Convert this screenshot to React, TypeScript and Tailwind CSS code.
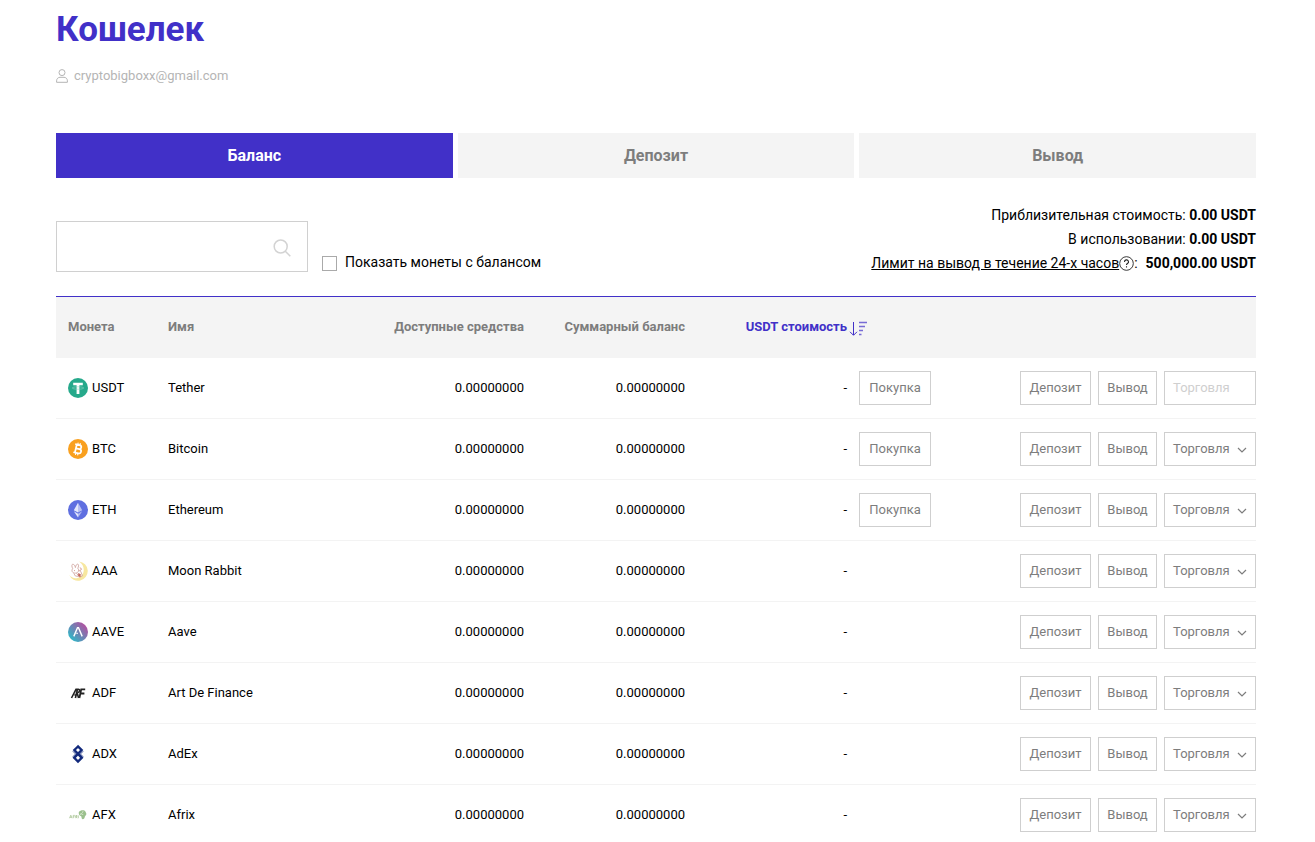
import type { ReactNode } from 'react'
import { useState } from 'react'

type Coin = {
  code: string
  name: string
  icon: ReactNode
  buy?: boolean
  tradeDisabled?: boolean
}

const coins: Coin[] = [
  {
    code: 'USDT',
    name: 'Tether',
    buy: true,
    tradeDisabled: true,
    icon: (
      <>
        <circle cx="10" cy="10" r="10" fill="#26a98b" />
        <path d="M5.200 4.800h9.600v2.400h-3.400V16H8.600V7.200H5.200z" fill="#fff" />
        <ellipse cx="10" cy="10" rx="5.800" ry="1.200" fill="none" stroke="#8ed3c3" strokeWidth="0.600" />
      </>
    ),
  },
  {
    code: 'BTC',
    name: 'Bitcoin',
    buy: true,
    icon: (
      <>
        <circle cx="10" cy="10" r="10" fill="#f9a01f" />
        <g transform="rotate(13 10 10)" fill="none" stroke="#fff">
          <path d="M7.800 5.600v8.800M6.200 5.800h4.600a2 2 0 0 1 0 4H8M6.200 14.200h5.200a2.200 2.200 0 0 0 0-4.400H8" strokeWidth="1.700" />
          <path d="M8.800 3.800v2M11 3.800v2M8.800 14.200v2M11 14.200v2" strokeWidth="1.100" />
        </g>
      </>
    ),
  },
  {
    code: 'ETH',
    name: 'Ethereum',
    buy: true,
    icon: (
      <>
        <circle cx="10" cy="10" r="10" fill="#5f6fe0" />
        <path d="M10 2.800 5.800 10.200 10 12.600z" fill="#e4e7fb" />
        <path d="M10 2.800l4.200 7.400-4.200 2.400z" fill="#b9c0f3" />
        <path d="M5.800 11.300 10 13.800v3.600z" fill="#e4e7fb" />
        <path d="M14.200 11.300 10 13.800v3.600z" fill="#b3bbf2" />
      </>
    ),
  },
  {
    code: 'AAA',
    name: 'Moon Rabbit',
    icon: (
      <>
        <path d="M11 .4a9.700 9.700 0 1 1-9.900 13.400c2 2.700 5.300 3.900 8.300 3.200 7.600-1.900 8.700-12 1.600-16.600z" fill="#f7e7a0" />
        <g fill="none" stroke="#d3a9a4" strokeWidth="0.900">
          <path d="M4.800 7.800C3.500 5.500 3.600 3.300 4.800 3.200s2.200 1.600 2.600 3.400C7.600 4.300 9 2.700 10 3.200s.6 2.600-.3 4.200" />
          <path d="M4.600 7.800c-1.600 2.400.2 4.600 2.900 4.300s4.200-2.500 2.400-4.800" />
          <path d="M8.500 12.200l3 4 3-1.400-1.800-4.400-2.600-1.400M5.800 12.400l1.600 2.600 3 .4" />
        </g>
        <path d="M10.200 12l2.600 1.200-.4 3-2.200-1.200z" fill="#c4685c" />
        <path d="M12.200 6.500l1.200 1.600-1.200 1.600M6.200 9.600h.8" stroke="#c98577" strokeWidth="0.900" fill="none" />
      </>
    ),
  },
  {
    code: 'AAVE',
    name: 'Aave',
    icon: (
      <>
        <defs>
          <linearGradient id="aave" x1="0.9" y1="0.15" x2="0.15" y2="0.85">
            <stop offset="0" stopColor="#b44fa0" />
            <stop offset="1" stopColor="#31b5c6" />
          </linearGradient>
        </defs>
        <circle cx="10" cy="10" r="10" fill="url(#aave)" />
        <path d="M5.800 14.400 9.500 5.800h1l3.700 8.600M8.400 11.400H9.800" fill="none" stroke="#fff" strokeWidth="1.400" />
      </>
    ),
  },
  {
    code: 'ADF',
    name: 'Art De Finance',
    icon: (
      <g fill="none" stroke="#222" strokeWidth="1.600">
        <path d="M3.500 15 8 6.300h2.400c1.800 0 1.500 3.200-.8 3.200M6.400 12h2.200M7.400 15l2-8.500M9.200 10l1.400 5" />
        <path d="M17.200 6.300h-4L11.400 15M12.400 10.500h4" strokeWidth="1.800" />
      </g>
    ),
  },
  {
    code: 'ADX',
    name: 'AdEx',
    icon: (
      <g fill="none" stroke="#12297c" strokeWidth="2.400">
        <path d="M10 2.500 6.400 6 13.800 13.800 10 17.500 6.200 13.800 13.600 6z" />
        <path d="M4.800 7.200 7.600 10l-2.800 2.800M15.200 7.200 12.400 10l2.800 2.800" strokeWidth="0.800" />
      </g>
    ),
  },
  {
    code: 'AFX',
    name: 'Afrix',
    icon: (
      <>
        <path
          d="M1.500 13.200 2.800 10.200l1.200 3M2 12.300h1.500M5.200 13.200v-2.800h1.600M5.200 11.800h1.400M7.800 13.200v-2.700h1.200v1.200H7.800l1.500 1.500M10.300 10.400v2.800"
          fill="none"
          stroke="#a9c596"
          strokeWidth="0.800"
        />
        <path d="M10.800 7c1.300-1.800 4-2.200 5.600-1.500 1.300.8 1.500 2.200 2 3.300-.1 1.400-1 1.800-1.500 2.800-.2 1.600-.9 2.600-2.300 2.700-1.200-.6-.9-2-1.400-3.100-1.400-.4-2.800-1.600-2.400-4.200z" fill="#9bc08d" />
        <path d="M12 9.300l2-.6 1 1.200M15 6.300l-.6 1.400" fill="none" stroke="#e3eedd" strokeWidth="0.900" />
      </>
    ),
  },
]

const tabs = ['Баланс', 'Депозит', 'Вывод']

const actionButton = 'h-[34px] border border-[#cfcfcf] bg-white text-[13px] text-[#7d7d7d]'

function CoinRow({ coin }: { coin: Coin }) {
  return (
    <tr className="h-[61px] border-b border-[#f3f3f3]">
      <td className="pl-3">
        <div className="flex items-center gap-1">
          <svg className="h-5 w-5 shrink-0" viewBox="0 0 20 20" aria-hidden="true">
            {coin.icon}
          </svg>
          <span>{coin.code}</span>
        </div>
      </td>
      <td className="pl-3">{coin.name}</td>
      <td className="pr-3 text-right">0.00000000</td>
      <td className="pr-3 text-right">0.00000000</td>
      <td className="pr-3 text-right">-</td>
      <td>
        <div className="flex items-center">
          {coin.buy && <button type="button" className={`${actionButton} w-[72px]`}>Покупка</button>}
          <div className="ml-auto flex gap-[7px]">
            <button type="button" className={`${actionButton} w-[71px]`}>Депозит</button>
            <button type="button" className={`${actionButton} w-[59px]`}>Вывод</button>
            <button
              type="button"
              aria-haspopup="menu"
              disabled={coin.tradeDisabled}
              className={`${actionButton} flex w-[92px] items-center justify-between px-2 disabled:text-[#cfcfcf]`}
            >
              Торговля
              {!coin.tradeDisabled && (
                <svg className="mt-0.5 h-2.5 w-2.5" viewBox="0 0 10 10" fill="none" stroke="#7d7d7d" strokeWidth="1.200" aria-hidden="true">
                  <path d="M1 3l4 4 4-4" />
                </svg>
              )}
            </button>
          </div>
        </div>
      </td>
    </tr>
  )
}

export default function App() {
  const [activeTab, setActiveTab] = useState(0)

  return (
    <main className="bg-white pt-2.5 pr-[59px] pl-14 font-['Roboto','Liberation_Sans',sans-serif] text-black">
      {/* Title */}
      <h1 className="text-[35px] leading-10 font-bold text-[#4130c8]">Кошелек</h1>
      <div className="mt-4 flex h-5 items-center gap-1.5 text-[13px] text-[#b5b5b5]">
        <svg className="h-3.5 w-3" viewBox="0 0 12 14" fill="none" stroke="currentColor" aria-hidden="true">
          <circle cx="6" cy="3.600" r="3" />
          <path d="M.6 13.300v-1.400C.6 9.600 2.200 8.300 4 8.300h4c1.800 0 3.400 1.300 3.400 3.600v1.400z" />
        </svg>
        <span>cryptobigboxx@gmail.com</span>
      </div>

      {/* Tabs */}
      <nav className="mt-[47px] grid grid-cols-3 gap-[5px]">
        {tabs.map((tab, i) => (
          <button
            key={tab}
            type="button"
            onClick={() => setActiveTab(i)}
            className={`h-[45px] text-base font-bold ${i === activeTab ? 'bg-[#4130c8] text-white' : 'bg-[#f4f4f4] text-[#7d7d7d]'}`}
          >
            {tab}
          </button>
        ))}
      </nav>

      {/* Search and totals */}
      <div className="mt-[25px] flex items-end justify-between text-sm leading-6">
        <div className="flex items-end gap-3.5 pb-[3px]">
          <div className="flex h-[51px] w-[252px] items-center border border-[#d0d0d0] pr-4">
            <input type="text" aria-label="Поиск" className="h-full min-w-0 flex-1 px-3 outline-none" />
            <svg className="mt-0.5 h-[18px] w-[18px]" viewBox="0 0 18 18" fill="none" stroke="#d3d3d3" strokeWidth="1.500" aria-hidden="true">
              <circle cx="7.700" cy="7.500" r="6.500" />
              <path d="M12.300 12.200l5 5" />
            </svg>
          </div>
          <label className="flex items-center gap-2 leading-5">
            <input type="checkbox" className="mt-0.5 h-[15px] w-[15px] appearance-none border border-[#aaa] bg-white checked:bg-[#4130c8]" />
            Показать монеты с балансом
          </label>
        </div>
        <div className="text-right">
          <p>
            Приблизительная стоимость: <b>0.00 USDT</b>
          </p>
          <p>
            В использовании: <b>0.00 USDT</b>
          </p>
          <p className="flex items-center justify-end">
            <a href="#limit" className="underline">Лимит на вывод в течение 24-х часов</a>
            <svg className="h-[15px] w-[15px]" viewBox="0 0 15 15" fill="none" stroke="#222" aria-hidden="true">
              <circle cx="7.500" cy="7.500" r="6.800" strokeWidth="0.900" />
              <path d="M5.500 5.900a2 2 0 1 1 3 1.700c-.7.400-1 .7-1 1.400M7.500 10.200v1.300" strokeWidth="1.100" />
            </svg>
            <span className="mr-2">:</span>
            <b>500,000.00 USDT</b>
          </p>
        </div>
      </div>

      {/* Coins */}
      <table className="mt-[21px] w-full table-fixed border-collapse border-t border-[#4130c8] text-[13px]">
        <colgroup>
          <col className="w-[100px]" />
          <col className="w-[219px]" />
          <col className="w-[161px]" />
          <col className="w-[161px]" />
          <col className="w-[162px]" />
          <col />
        </colgroup>
        <thead>
          <tr className="h-[61px] bg-[#f4f4f4] text-left text-[#7d7d7d]">
            <th className="pb-0.5 pl-3">Монета</th>
            <th className="pb-0.5 pl-3">Имя</th>
            <th className="pr-3 pb-0.5 text-right">Доступные средства</th>
            <th className="pr-3 pb-0.5 text-right">Суммарный баланс</th>
            <th className="pr-3 pb-0.5 text-right text-[#4130c8]">
              <button type="button" className="relative font-bold">
                USDT стоимость
                <svg className="absolute top-1 left-full ml-0.5 h-4 w-[18px]" viewBox="0 0 18 16" fill="none" stroke="currentColor" aria-hidden="true">
                  <path d="M4.500 1v13M1 10.800l3.500 3.500L8 10.800" />
                  <path d="M10 1.500h8M10 5.500h6M10 9.500h4M10 13.500h2.500" strokeWidth="1.600" opacity="0.700" />
                </svg>
              </button>
            </th>
            <th aria-label="Действия" />
          </tr>
        </thead>
        <tbody>
          {coins.map((coin) => (
            <CoinRow key={coin.code} coin={coin} />
          ))}
        </tbody>
      </table>
    </main>
  )
}
